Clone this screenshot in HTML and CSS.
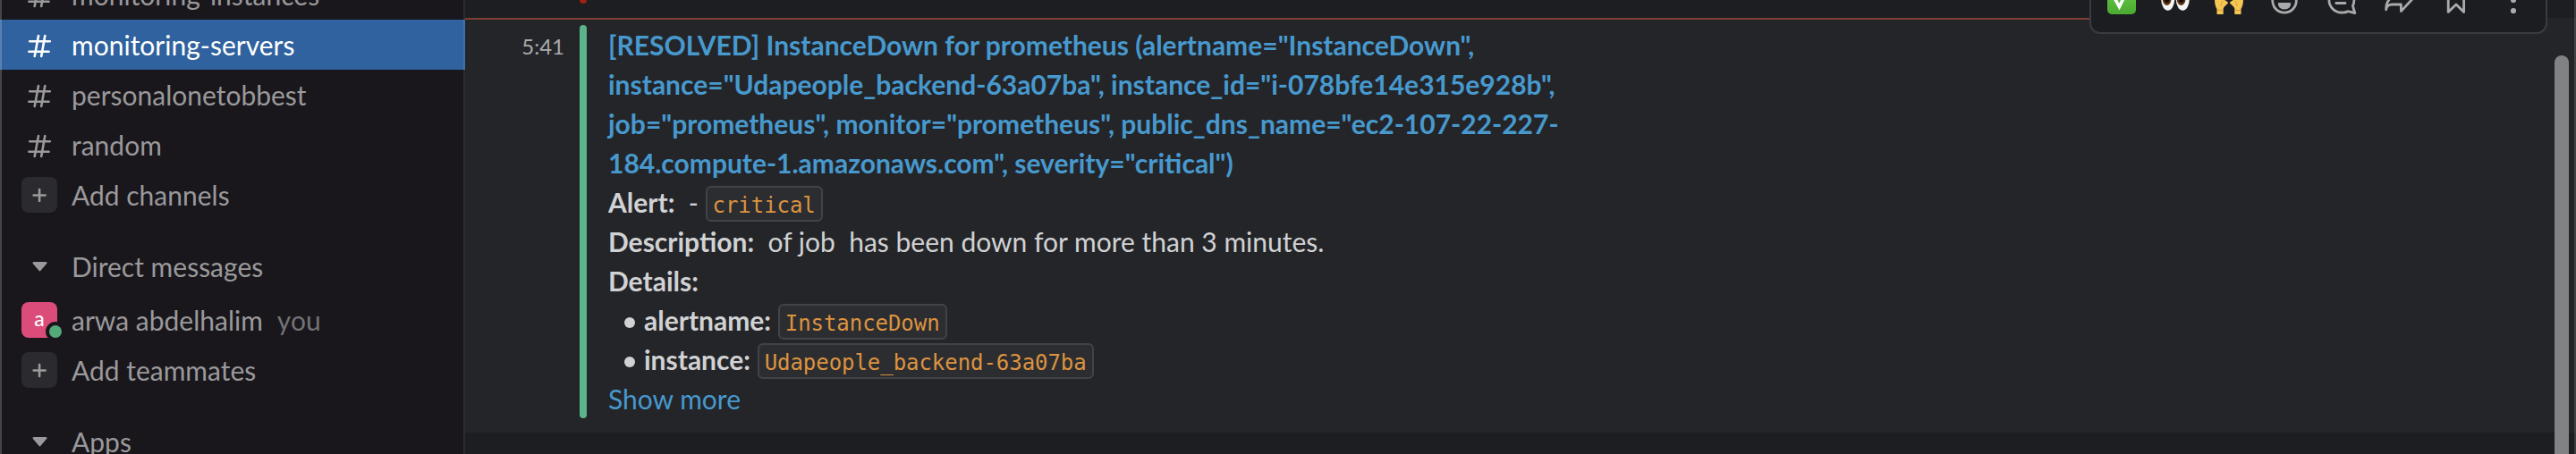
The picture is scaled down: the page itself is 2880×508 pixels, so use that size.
FILE: index.html
```html
<!DOCTYPE html>
<html lang="en">
<head>
<meta charset="utf-8">
<title>monitoring-servers</title>
<link rel="stylesheet" href="styles.css">
</head>
<body>
<svg class="defs" aria-hidden="true">
  <symbol id="hash" viewBox="0 0 40 40"><path d="M9.2 16.3H31.8M8.4 27.7H30.6M19 10L14.7 33M26.3 10L22.2 33"/></symbol>
  <symbol id="plus" viewBox="0 0 40 40"><path d="M13.6 20.5H26.6M20.1 14V27"/></symbol>
  <symbol id="caret" viewBox="0 0 40 40"><path d="M13.8 16.2H27.2L20.5 24Z" fill="currentColor"/></symbol>
</svg>
<div class="app">
  <nav class="sidebar">
    <div class="row"><svg class="icon"><use href="#hash"/></svg><span>monitoring-instances</span></div>
    <div class="row selected"><svg class="icon"><use href="#hash"/></svg><span>monitoring-servers</span></div>
    <div class="row"><svg class="icon"><use href="#hash"/></svg><span>personalonetobbest</span></div>
    <div class="row"><svg class="icon"><use href="#hash"/></svg><span>random</span></div>
    <div class="row"><svg class="icon tile"><use href="#plus"/></svg><span>Add channels</span></div>
    <div class="row heading"><svg class="icon"><use href="#caret"/></svg><span>Direct messages</span></div>
    <div class="row"><span class="avatar">a<i class="presence"></i></span><span>arwa abdelhalim</span><span class="you">you</span></div>
    <div class="row"><svg class="icon tile"><use href="#plus"/></svg><span>Add teammates</span></div>
    <div class="row heading"><svg class="icon"><use href="#caret"/></svg><span>Apps</span></div>
  </nav>
  <main class="main">
    <div class="previous"><div class="red-bar"></div></div>
    <div class="divider"></div>
    <article class="message">
      <time class="time">5:41</time>
      <div class="green-bar"></div>
      <div class="attachment">
        <a class="title">[RESOLVED] InstanceDown for prometheus (alertname="InstanceDown", instance="Udapeople_backend-63a07ba", instance_id="i-078bfe14e315e928b", job="prometheus", monitor="prometheus", public_dns_name="ec2-107-22-227-184.compute-1.amazonaws.com", severity="critical")</a>
        <p class="line"><b>Alert:</b>  - <code>critical</code></p>
        <p class="line"><b>Description:</b>  of job  has been down for more than 3 minutes.</p>
        <p class="line"><b>Details:</b></p>
        <p class="line item"><i class="bullet"></i><b>alertname:</b> <code>InstanceDown</code></p>
        <p class="line item"><i class="bullet"></i><b>instance:</b> <code>Udapeople_backend-63a07ba</code></p>
        <a class="line more">Show more</a>
      </div>
    </article>
    <div class="toolbar">
      <span class="emoji"><svg viewBox="-16 -16 32 32"><defs><linearGradient id="g" x1="0" y1="0" x2="0" y2="1"><stop offset="0" stop-color="#6ccb4b"/><stop offset="1" stop-color="#49ab30"/></linearGradient></defs><rect x="-16" y="-16" width="32" height="32" rx="5" fill="url(#g)"/><path d="M-10 -6L-2.6 7.5L8 -14" fill="none" stroke="#fff" stroke-width="3.6"/></svg></span>
      <span class="emoji"><svg viewBox="-16 -16 32 32"><ellipse cx="-8.3" cy="-1" rx="7.5" ry="12.8" fill="#f5f5f5"/><ellipse cx="8.3" cy="-1" rx="7.5" ry="12.8" fill="#f5f5f5"/><ellipse cx="-9.4" cy="-.5" rx="4.8" ry="6.4" fill="#5c3213"/><ellipse cx="6.6" cy="-.5" rx="4.8" ry="6.4" fill="#5c3213"/><ellipse cx="-9.2" cy="-1" rx="2.8" ry="4" fill="#160b05"/><ellipse cx="6.8" cy="-1" rx="2.8" ry="4" fill="#160b05"/></svg></span>
      <span class="emoji"><svg viewBox="-16 -16 32 32"><g id="hand"><path d="M-13.5 16V10C-15.3 7 -16 4 -16 -1V-12C-12 -16 -7 -15 -5 -11V0C-3.5 .5 -2 1.5 -.8 3.2C-2.5 5.5 -5.5 7 -6.3 9.5V16Z" fill="#f6c653"/><path d="M-6.5 1C-8 2.5 -9 4.5 -9 7M-13.3 10.5C-11.5 12 -8.5 12 -6.4 10.5" fill="none" stroke="#d99a2b" stroke-width="1"/></g><use href="#hand" transform="scale(-1 1)"/></svg></span>
      <span class="tool"><svg viewBox="-16 -16 32 32"><circle cy=".8" r="13.3"/><path d="M-6.2 4H6.2C6 7.6 3.4 9.4 0 9.4S-6 7.6 -6.2 4Z" fill="currentColor" stroke-width="2"/><path d="M-4.8 -6V-2M4.8 -6V-2"/></svg></span>
      <span class="tool"><svg viewBox="-16 -16 32 32"><path d="M13.9 0A14 14 0 1 0 0 14C3 14.2 4.8 13.8 6.8 12.7C9.3 13.2 12 14 14.8 14.6C14 11.5 13 9.5 12.5 6.5C13.4 4.6 13.9 2.5 13.9 0ZM-6.2 3.5H4M-6.2 -3.5H6"/></svg></span>
      <span class="tool"><svg viewBox="-16 -16 32 32"><path d="M-14.3 10.8C-14 7 -11 4.8 -7 5H2.4V12.6L15 -1L2.4 -13V-5.5C-8 -5.5 -14.5 0 -14.3 10.8Z"/></svg></span>
      <span class="tool"><svg viewBox="-16 -16 32 32"><path d="M-8.8 -14V13.4L0 5L8.6 13.4V-14Z"/></svg></span>
      <span class="tool"><svg viewBox="-16 -16 32 32"><g fill="currentColor" stroke="none"><circle cy="-12" r="3.1"/><circle cy="0" r="3.1"/><circle cy="12" r="3.1"/></g></svg></span>
    </div>
    <div class="scrollbar"></div>
  </main>
</div>
</body>
</html>
```
FILE: styles.css
```css
* { box-sizing: border-box; }
body {
  margin: 0;
  overflow: hidden;
  background: #1d1e22;
  color: #d1d2d3;
  font: 30px/44px Lato, "Liberation Sans", sans-serif;
}
.defs { display: none; }
.app {
  position: relative;
  display: flex;
  height: 508px;
  overflow: hidden;
}
.app::before,
.app::after {
  content: "";
  position: absolute;
  z-index: 3;
  top: 0;
  bottom: 0;
  left: 0;
  width: 2px;
  background: rgba(255, 255, 255, .2);
}
.app::after {
  left: auto;
  right: 0;
  background: rgba(255, 255, 255, .14);
}

/* Sidebar */
.sidebar {
  position: relative;
  flex: 0 0 520px;
  background: #19171c;
  color: #9a999b;
}
.sidebar::after {
  content: "";
  position: absolute;
  top: 0;
  right: 0;
  bottom: 0;
  width: 2px;
  background: rgba(255, 255, 255, .09);
}
.row {
  display: flex;
  align-items: center;
  height: 56px;
  padding-left: 24px;
  white-space: nowrap;
}
.row:first-child { margin-top: -34px; }
.selected { background: #2f629e; color: #fff; }
.heading { margin: 24px 0 4px; }
.icon {
  flex: none;
  width: 40px;
  height: 40px;
  margin-right: 16px;
  fill: none;
  stroke: currentColor;
  stroke-width: 2.6;
  stroke-linecap: round;
  stroke-linejoin: round;
}
.tile { border-radius: 8px; background: #2b2a2f; }
.avatar {
  position: relative;
  width: 40px;
  height: 40px;
  margin-right: 16px;
  border-radius: 8px;
  background: #db4c7b;
  color: #fff;
  font-size: 23px;
  font-weight: 500;
  line-height: 36px;
  text-align: center;
}
.presence {
  position: absolute;
  right: -9px;
  bottom: -4px;
  width: 22px;
  height: 22px;
  border: 4px solid #19171c;
  border-radius: 50%;
  background: #55aa7a;
}
.you { margin-left: 16px; color: #737276; }

/* Messages */
.main {
  position: relative;
  flex: 1;
  min-width: 0;
}
.previous {
  height: 20px;
  padding-left: 128px;
}
.red-bar {
  width: 8px;
  height: 4px;
  border-radius: 0 0 4px 4px;
  background: #a0200f;
}
.divider {
  height: 2px;
  background: linear-gradient(90deg, #7d3e34 1840px, #242529 1840px);
}
.message {
  display: flex;
  height: 462px;
  padding: 6px 0 16px;
  background: #242529;
}
.time {
  width: 111px;
  margin-right: 17px;
  padding-top: 2px;
  color: #a9aaac;
  font-size: 24px;
  text-align: right;
}
.green-bar {
  width: 8px;
  margin-right: 24px;
  border-radius: 4px;
  background: #5bb48a;
}
.attachment { width: 1080px; }
.title {
  display: block;
  color: #4799ce;
  font-weight: 700;
}
.line {
  display: block;
  height: 44px;
  margin: 0;
  white-space: pre;
}
.more { color: #4799ce; }
code {
  padding: 6px 6px 2px;
  border: 2px solid #424347;
  border-radius: 6px;
  background: #2b2d30;
  color: #dd9340;
  font: 24px/28px "DejaVu Sans Mono", monospace;
  letter-spacing: -.05px;
}
.item { padding-left: 18px; }
.bullet {
  display: inline-block;
  width: 12px;
  height: 12px;
  margin-right: 10px;
  border-radius: 50%;
  background: #d1d2d3;
  vertical-align: 3px;
}

/* Hover actions */
.toolbar {
  position: absolute;
  top: -38px;
  left: 1816px;
  display: flex;
  align-items: center;
  width: 512px;
  height: 76px;
  padding: 0 4px;
  border: 2px solid #3b3c40;
  border-radius: 12px;
  background: #1c1d20;
  color: #a9aaac;
}
.emoji,
.tool {
  display: flex;
  flex: 0 0 60px;
  justify-content: center;
}
.tool { flex-basis: 64px; }
.toolbar svg { width: 32px; height: 32px; overflow: visible; }
.tool svg {
  fill: none;
  stroke: currentColor;
  stroke-width: 2.8;
  stroke-linejoin: round;
  stroke-linecap: round;
}
.scrollbar {
  position: absolute;
  top: 62px;
  right: 8px;
  bottom: -20px;
  width: 16px;
  border-radius: 8px;
  background: #818284;
}
```
